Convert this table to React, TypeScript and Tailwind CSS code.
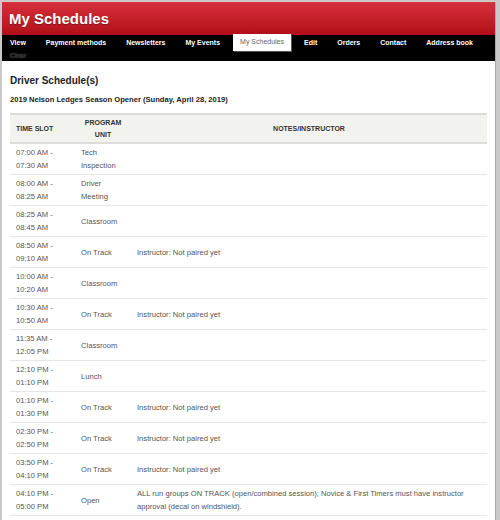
import React from "react";

interface Slot {
    start: string;
    end: string;
    unit: string;
    notes?: string;
}

const SLOTS: Slot[] = [
    { start: "07:00 AM -", end: "07:30 AM", unit: "Tech Inspection" },
    { start: "08:00 AM -", end: "08:25 AM", unit: "Driver Meeting" },
    { start: "08:25 AM -", end: "08:45 AM", unit: "Classroom" },
    { start: "08:50 AM -", end: "09:10 AM", unit: "On Track", notes: "Instructor: Not paired yet" },
    { start: "10:00 AM -", end: "10:20 AM", unit: "Classroom" },
    { start: "10:30 AM -", end: "10:50 AM", unit: "On Track", notes: "Instructor: Not paired yet" },
    { start: "11:35 AM -", end: "12:05 PM", unit: "Classroom" },
    { start: "12:10 PM -", end: "01:10 PM", unit: "Lunch" },
    { start: "01:10 PM -", end: "01:30 PM", unit: "On Track", notes: "Instructor: Not paired yet" },
    { start: "02:30 PM -", end: "02:50 PM", unit: "On Track", notes: "Instructor: Not paired yet" },
    { start: "03:50 PM -", end: "04:10 PM", unit: "On Track", notes: "Instructor: Not paired yet" },
    {
        start: "04:10 PM -",
        end: "05:00 PM",
        unit: "Open",
        notes: "ALL run groups ON TRACK (open/combined session); Novice & First Timers must have instructor approval (decal on windshield).",
    },
];

const NAV = ["View", "Payment methods", "Newsletters", "My Events", "My Schedules", "Edit", "Orders", "Contact", "Address book"];

function NavBar() {
    return (
        <div className="bg-black h-[26px] flex flex-col">
            <div className="flex items-stretch h-[16px]">
                {NAV.map((item) =>
                    item === "My Schedules" ? (
                        <div
                            key={item}
                            className="mx-[3px] px-[7px] bg-white text-[#666] text-[7px] flex items-center -mt-[1px] shadow-[1px_1px_0_#555]"
                        >
                            {item}
                        </div>
                    ) : (
                        <div
                            key={item}
                            className="px-[10px] first:pl-[8px] text-white font-bold text-[7px] flex items-center [text-shadow:0_0_1px_#000]"
                        >
                            {item}
                        </div>
                    )
                )}
            </div>
            <div className="pl-[8px] text-[6.5px] leading-[10px] text-[#222] font-bold [text-shadow:0_0_1px_#777]">
                Clear
            </div>
        </div>
    );
}

function ScheduleTable() {
    return (
        <div className="mx-[8px] text-[7.6px] leading-[13px] text-[#555]">
            <div className="grid grid-cols-[65px_56px_1fr] bg-[#f2f2ee] border-t-2 border-b-2 border-[#dcdcd8] h-[31px] items-center text-[#333] font-bold text-[7px] leading-[12px]">
                <div className="pl-[6px]">TIME SLOT</div>
                <div className="text-center">
                    PROGRAM
                    <br />
                    UNIT
                </div>
                <div className="text-center">NOTES/INSTRUCTOR</div>
            </div>
            {SLOTS.map((s) => (
                <div
                    key={s.start}
                    className="grid grid-cols-[65px_56px_1fr] h-[31px] items-center border-b border-[#e6e6e6]"
                >
                    <div className="pl-[6px]">
                        {s.start}
                        <br />
                        {s.end}
                    </div>
                    <div className="pl-[6px] pr-[4px]">{s.unit}</div>
                    <div className="pl-[6px] pr-[6px]">{s.notes}</div>
                </div>
            ))}
        </div>
    );
}

export default function App() {
    return (
        <div className="w-[500px] h-[520px] overflow-hidden bg-[#c9c9c9] pl-[2px] pr-[4px] pt-[2px] font-['Liberation_Sans',Arial,sans-serif]">
            <div className="bg-white h-full border-r border-[#a9a9a9]">
                <div className="h-[33px] bg-gradient-to-b from-[#d52e3a] to-[#b10d18] border-t border-[#e2343f] flex items-center pl-[7px]">
                    <h1 className="text-white font-bold text-[15px] mt-[1px] [text-shadow:0_1px_1px_rgba(0,0,0,0.3)]">
                        My Schedules
                    </h1>
                </div>
                <NavBar />
                <div className="pt-[13px] px-[8px]">
                    <h2 className="text-[#222] font-bold text-[10px] leading-[14px]">Driver Schedule(s)</h2>
                    <div className="mt-[6px] text-[#222] font-bold text-[7.6px] leading-[12px]">
                        2019 Nelson Ledges Season Opener (Sunday, April 28, 2019)
                    </div>
                </div>
                <div className="mt-[7px]">
                    <ScheduleTable />
                </div>
            </div>
        </div>
    );
}
